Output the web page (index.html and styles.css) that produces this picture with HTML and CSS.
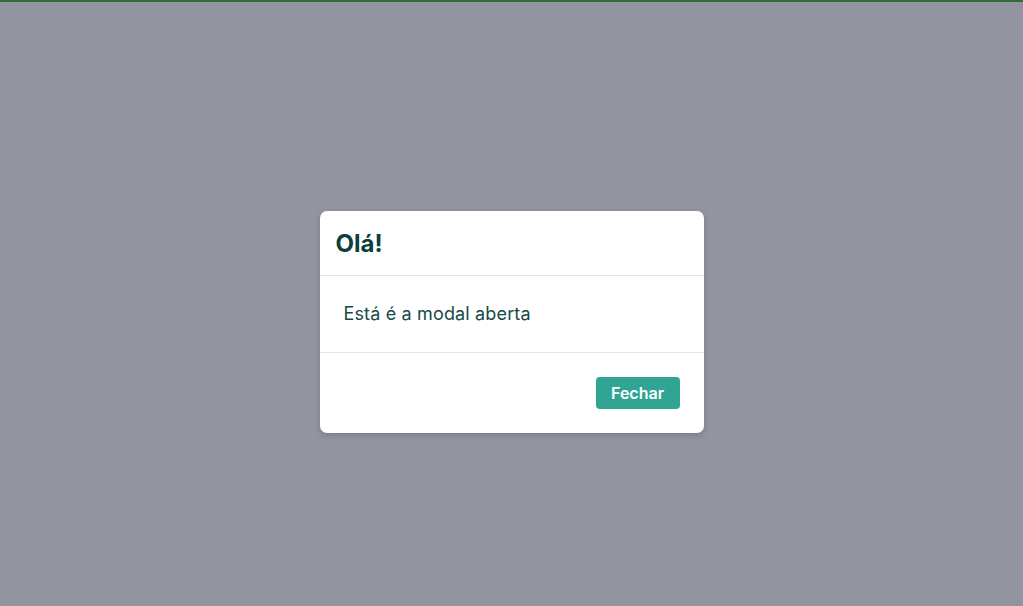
FILE: index.html
```html
<!DOCTYPE html>
<html lang="pt-BR">
<head>
<meta charset="utf-8">
<title>Modal</title>
<link rel="stylesheet" href="styles.css">
</head>
<body>
<div class="topline"></div>
<div class="overlay">
  <div class="modal" role="dialog">
    <header class="modal-header">
      <h2 class="modal-title">Olá!</h2>
    </header>
    <div class="modal-body">
      <p>Está é a modal aberta</p>
    </div>
    <footer class="modal-footer">
      <button class="btn" type="button">Fechar</button>
    </footer>
  </div>
</div>
</body>
</html>
```

FILE: styles.css
```css
* { box-sizing: border-box; }
html, body {
  margin: 0;
  height: 100%;
}
body {
  font-family: Inter, "Noto Sans", sans-serif;
  background: #92959f;
  display: flex;
  flex-direction: column;
}
.topline {
  height: 2px;
  background: #2f6a3d;
  flex: none;
}
.overlay {
  flex: 1;
  display: flex;
  align-items: flex-start;
  justify-content: center;
  padding-top: 209px;
}
.modal {
  width: 384px;
  background: #fff;
  border-radius: 7px;
  box-shadow: 0 2px 6px rgba(0,0,0,0.18);
  color: #0f4441;
}
.modal-header {
  height: 65px;
  padding: 0 16px;
  display: flex;
  align-items: center;
  border-bottom: 1px solid #e3e5e8;
}
.modal-title {
  margin: 0;
  font-size: 24px;
  font-weight: 700;
  color: #0b3f3b;
}
.modal-body {
  height: 77px;
  padding: 0 24px;
  display: flex;
  align-items: center;
  border-bottom: 1px solid #e3e5e8;
}
.modal-body p {
  margin: 0;
  font-size: 18px;
  letter-spacing: 0.15px;
  color: #174a46;
  padding-bottom: 2px;
}
.modal-footer {
  height: 80px;
  padding: 0 24px;
  display: flex;
  align-items: center;
  justify-content: flex-end;
}
.btn {
  width: 84px;
  height: 32px;
  border: 0;
  border-radius: 4px;
  background: #30a594;
  color: #fff;
  font-family: Inter, "Noto Sans", sans-serif;
  font-size: 16px;
  font-weight: 600;
  cursor: pointer;
}
```
